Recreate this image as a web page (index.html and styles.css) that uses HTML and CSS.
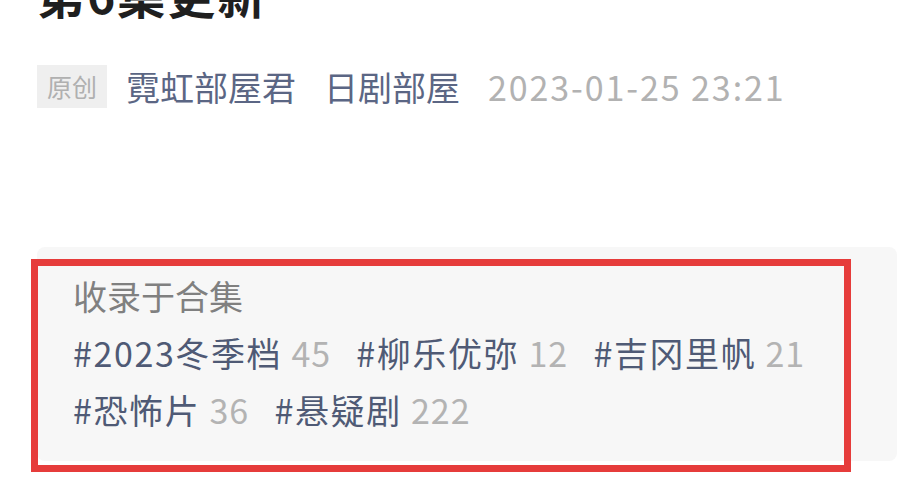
FILE: index.html
```html
<!DOCTYPE html>
<html lang="zh-CN">
<head>
    <meta charset="UTF-8">
    <meta name="viewport" content="width=device-width, initial-scale=1.0">
    <title>第6集更新</title>
    <link rel="stylesheet" href="styles.css">
</head>
<body>
    <div class="article">
        <h1 class="title">第6集更新</h1>
        <div class="meta">
            <span class="tag">原创</span>
            <span class="author">霓虹部屋君</span>
            <span class="author">日剧部屋</span>
            <span class="date">2023-01-25 23:21</span>
        </div>
        <div class="collection">
            <div class="collection-title">收录于合集</div>
            <div class="topics">
                <span class="topic">#2023冬季档 <em>45</em></span>
                <span class="topic">#柳乐优弥 <em>12</em></span>
                <span class="topic">#吉冈里帆 <em>21</em></span>
                <span class="topic">#恐怖片 <em>36</em></span>
                <span class="topic">#悬疑剧 <em>222</em></span>
            </div>
            <div class="highlight"></div>
        </div>
    </div>
</body>
</html>
```

FILE: styles.css
```css
body {
    margin: 0;
    padding: 0;
    min-height: 499px;
    background-color: #fff;
    font-family: "Noto Sans CJK SC", "Noto Sans", sans-serif;
}
.article {
    padding-left: 37px;
}
.title {
    margin: -31px 0 0 0;
    font-size: 48px;
    line-height: 48px;
    letter-spacing: 2px;
    font-weight: bold;
    color: #1f1f1f;
}
.meta {
    display: flex;
    align-items: center;
    margin-top: 48px;
    height: 43px;
    font-size: 34px;
}
.tag {
    background-color: #efefef;
    color: #b0b0b0;
    font-size: 25px;
    line-height: 43px;
    padding: 0 10px;
    margin-right: 19px;
}
.author {
    color: #5b6684;
    margin-right: 28px;
}
.date {
    color: #b2b2b2;
    letter-spacing: 1.9px;
}
.collection {
    position: relative;
    width: 860px;
    margin-top: 139px;
    padding: 20px 36px 23px;
    box-sizing: border-box;
    background-color: #f7f7f7;
    border-radius: 8px;
    font-size: 34px;
    line-height: 57px;
}
.collection-title {
    color: #808080;
}
.topics {
    width: 760px;
    letter-spacing: 1.6px;
}
.topic {
    color: #4f5a75;
    margin-right: 16px;
    white-space: nowrap;
}
.topic em {
    font-style: normal;
    color: #b3b3b3;
    letter-spacing: 1px;
}
.highlight {
    position: absolute;
    left: -6px;
    top: 12px;
    width: 820px;
    height: 213px;
    box-sizing: border-box;
    border: 7px solid #e63c3b;
}
```
